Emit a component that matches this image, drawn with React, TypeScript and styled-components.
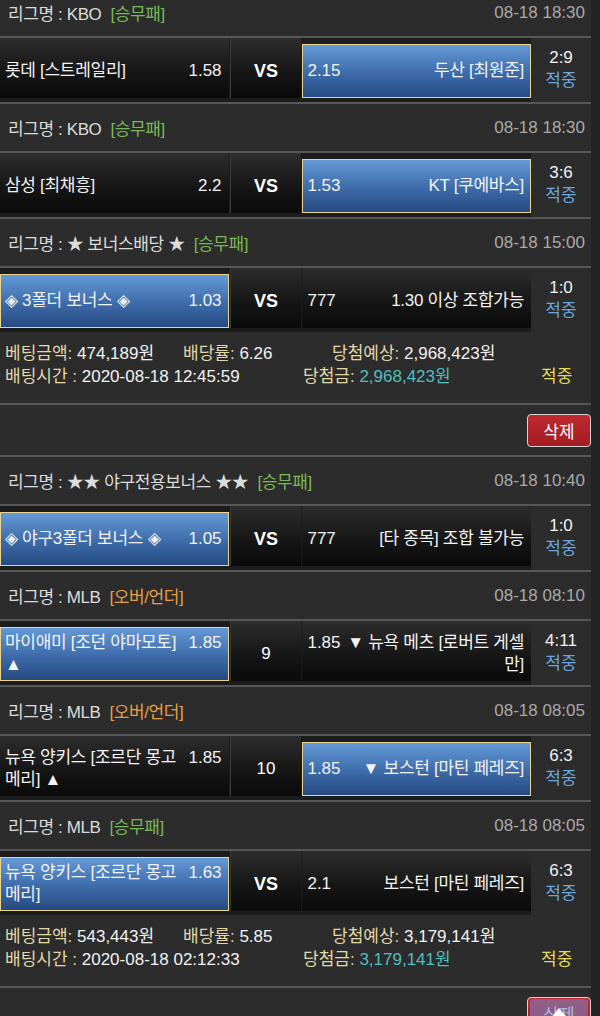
import React from "react";
import styled, { createGlobalStyle } from "styled-components";

const GlobalStyle = createGlobalStyle`
  html, body {
    margin: 0;
    padding: 0;
    background: #232323;
  }
  body {
    font-family: "Liberation Sans", Arial, "Noto Sans CJK KR", sans-serif;
    font-size: 17px;
    color: #eeeeee;
    overflow: hidden;
  }
`;

const Page = styled.div`
  width: 591px;
  margin-top: -11px;
  background: #2c2c2c;
`;

const LeagueHeader = styled.div`
  display: flex;
  align-items: center;
  justify-content: space-between;
  height: 47px;
  padding: 0 6px 0 8px;
  border-bottom: 2px solid #575757;
`;

const LeagueName = styled.div`
  display: flex;
  align-items: center;
  gap: 9px;
  color: #dcdcdc;
  letter-spacing: -0.4px;
`;

const Tag = styled.span<{ $kind: "green" | "orange" }>`
  color: ${({ $kind }) => ($kind === "green" ? "#79b957" : "#e79f45")};
`;

const DateText = styled.span`
  color: #a9a9a9;
`;

const MatchRow = styled.div<{ $divider: boolean }>`
  display: flex;
  min-height: 64px;
  border-bottom: ${({ $divider }) => ($divider ? "2px solid #575757" : "none")};
`;

const Board = styled.div`
  display: flex;
  gap: 1px;
  width: 531px;
  padding-bottom: 4px;
  background: #1c1c1c;
`;

const SideCell = styled.div<{ $picked?: boolean }>`
  box-sizing: border-box;
  width: 229px;
  display: flex;
  align-items: center;
  margin-top: ${({ $picked }) => ($picked ? "6px" : "0")};
  padding: ${({ $picked }) => ($picked ? "0 6px 0 4px" : "6px 7px 0 5px")};
  background: ${({ $picked }) =>
    $picked
      ? "linear-gradient(to bottom, #6599d7, #3d6ba9 55%, #264a80)"
      : "linear-gradient(to bottom, #2d2d2d, #151515 60%, #0a0a0a)"};
  border: ${({ $picked }) => ($picked ? "1px solid #e9d591" : "none")};
  color: #f3f3f3;
`;

const SideText = styled.div<{ $right?: boolean }>`
  width: 100%;
  line-height: 22px;
  letter-spacing: -0.3px;
  text-align: ${({ $right }) => ($right ? "right" : "left")};
`;

const Odds = styled.span<{ $side: "left" | "right" }>`
  float: ${({ $side }) => $side};
  letter-spacing: 0;
  margin-${({ $side }) => ($side === "left" ? "right" : "left")}: 6px;
`;

const MidCell = styled.div<{ $bold?: boolean }>`
  width: 71px;
  display: flex;
  align-items: center;
  justify-content: center;
  padding-top: 6px;
  border-left: 1px solid #3a3a3a;
  background: linear-gradient(to bottom, #2d2d2d, #151515 60%, #0a0a0a);
  color: #ffffff;
  font-size: ${({ $bold }) => ($bold ? "18px" : "17px")};
  font-weight: ${({ $bold }) => ($bold ? 700 : 400)};
`;

const ScoreCol = styled.div`
  flex: 1;
  display: flex;
  flex-direction: column;
  align-items: center;
  justify-content: center;
  line-height: 23px;
  padding-bottom: 2px;
`;

const Score = styled.span`
  color: #f0f0f0;
`;

const Hit = styled.span`
  color: #6aa7df;
`;

const Summary = styled.div`
  padding: 10px 0 0 5px;
  height: 61px;
  border-bottom: 2px solid #575757;
`;

const SummaryLine = styled.div<{ $cols: string }>`
  display: grid;
  grid-template-columns: ${({ $cols }) => $cols};
  line-height: 23px;
  white-space: nowrap;
`;

const Label = styled.span`
  color: #e3d8a6;
`;

const Value = styled.span<{ $tone?: "white" | "teal" }>`
  color: ${({ $tone }) => ($tone === "teal" ? "#4fbfc0" : "#f2f2f2")};
`;

const Status = styled.span`
  color: #e6dc5c;
`;

const ButtonRow = styled.div`
  display: flex;
  justify-content: flex-end;
  align-items: center;
  height: 50px;
  border-bottom: 2px solid #575757;
`;

const DeleteButton = styled.button`
  width: 64px;
  height: 33px;
  border: 1px solid #d6d6d6;
  border-radius: 4px;
  background: linear-gradient(to bottom, #c02a30, #a21c22);
  color: #ffffff;
  font-family: inherit;
  font-size: 17px;
  padding: 0;
`;

const ScrollTop = styled.div`
  position: fixed;
  left: 530px;
  top: 999px;
  width: 58px;
  height: 40px;
  border-radius: 3px;
  background: rgba(118, 132, 196, 0.6);
  display: flex;
  justify-content: center;
  padding-top: 9px;
  box-sizing: border-box;
`;

type Side = { name: string; odds: string; picked?: boolean };
type Match = {
  league: string;
  tag: string;
  tagKind: "green" | "orange";
  date: string;
  home: Side;
  away: Side;
  mid: string;
  midBold?: boolean;
  score: string;
};
type Bet = {
  matches: Match[];
  amount: string;
  rate: string;
  expect: string;
  time: string;
  win: string;
};

const WDL = { tag: "[승무패]", tagKind: "green" as const };
const OU = { tag: "[오버/언더]", tagKind: "orange" as const };

const bets: Bet[] = [
  {
    matches: [
      {
        league: "리그명 : KBO",
        ...WDL,
        date: "08-18 18:30",
        home: { name: "롯데 [스트레일리]", odds: "1.58" },
        away: { name: "두산 [최원준]", odds: "2.15", picked: true },
        mid: "VS",
        midBold: true,
        score: "2:9",
      },
      {
        league: "리그명 : KBO",
        ...WDL,
        date: "08-18 18:30",
        home: { name: "삼성 [최채흥]", odds: "2.2" },
        away: { name: "KT [쿠에바스]", odds: "1.53", picked: true },
        mid: "VS",
        midBold: true,
        score: "3:6",
      },
      {
        league: "리그명 : ★ 보너스배당 ★",
        ...WDL,
        date: "08-18 15:00",
        home: { name: "◈ 3폴더 보너스 ◈", odds: "1.03", picked: true },
        away: { name: "1.30 이상 조합가능", odds: "777" },
        mid: "VS",
        midBold: true,
        score: "1:0",
      },
    ],
    amount: "474,189원",
    rate: "6.26",
    expect: "2,968,423원",
    time: "2020-08-18 12:45:59",
    win: "2,968,423원",
  },
  {
    matches: [
      {
        league: "리그명 : ★★ 야구전용보너스 ★★",
        ...WDL,
        date: "08-18 10:40",
        home: { name: "◈ 야구3폴더 보너스 ◈", odds: "1.05", picked: true },
        away: { name: "[타 종목] 조합 불가능", odds: "777" },
        mid: "VS",
        midBold: true,
        score: "1:0",
      },
      {
        league: "리그명 : MLB",
        ...OU,
        date: "08-18 08:10",
        home: { name: "마이애미 [조던 야마모토] ▲", odds: "1.85", picked: true },
        away: { name: "▼ 뉴욕 메츠 [로버트 게셀만]", odds: "1.85" },
        mid: "9",
        score: "4:11",
      },
      {
        league: "리그명 : MLB",
        ...OU,
        date: "08-18 08:05",
        home: { name: "뉴욕 양키스 [조르단 몽고메리] ▲", odds: "1.85" },
        away: { name: "▼ 보스턴 [마틴 페레즈]", odds: "1.85", picked: true },
        mid: "10",
        score: "6:3",
      },
      {
        league: "리그명 : MLB",
        ...WDL,
        date: "08-18 08:05",
        home: { name: "뉴욕 양키스 [조르단 몽고메리]", odds: "1.63", picked: true },
        away: { name: "보스턴 [마틴 페레즈]", odds: "2.1" },
        mid: "VS",
        midBold: true,
        score: "6:3",
      },
    ],
    amount: "543,443원",
    rate: "5.85",
    expect: "3,179,141원",
    time: "2020-08-18 02:12:33",
    win: "3,179,141원",
  },
];

const MatchBlock = ({ m, divider }: { m: Match; divider: boolean }) => (
  <>
    <LeagueHeader>
      <LeagueName>
        <span>{m.league}</span>
        <Tag $kind={m.tagKind}>{m.tag}</Tag>
      </LeagueName>
      <DateText>{m.date}</DateText>
    </LeagueHeader>
    <MatchRow $divider={divider}>
      <Board>
        <SideCell $picked={m.home.picked}>
          <SideText>
            <Odds $side="right">{m.home.odds}</Odds>
            {m.home.name}
          </SideText>
        </SideCell>
        <MidCell $bold={m.midBold}>{m.mid}</MidCell>
        <SideCell $picked={m.away.picked}>
          <SideText $right>
            <Odds $side="left">{m.away.odds}</Odds>
            {m.away.name}
          </SideText>
        </SideCell>
      </Board>
      <ScoreCol>
        <Score>{m.score}</Score>
        <Hit>적중</Hit>
      </ScoreCol>
    </MatchRow>
  </>
);

const App = () => (
  <>
    <GlobalStyle />
    <Page>
      {bets.map((bet, bi) => (
        <div key={bi}>
          {bet.matches.map((m, i) => (
            <MatchBlock key={i} m={m} divider={i < bet.matches.length - 1} />
          ))}
          <Summary>
            <SummaryLine $cols="178px 149px auto">
              <span>
                <Label>베팅금액:</Label> <Value>{bet.amount}</Value>
              </span>
              <span>
                <Label>배당률:</Label> <Value>{bet.rate}</Value>
              </span>
              <span>
                <Label>당첨예상:</Label> <Value>{bet.expect}</Value>
              </span>
            </SummaryLine>
            <SummaryLine $cols="298px 238px auto">
              <span>
                <Label>배팅시간 :</Label> <Value>{bet.time}</Value>
              </span>
              <span>
                <Label>당첨금:</Label> <Value $tone="teal">{bet.win}</Value>
              </span>
              <Status>적중</Status>
            </SummaryLine>
          </Summary>
          <ButtonRow>
            <DeleteButton>삭제</DeleteButton>
          </ButtonRow>
        </div>
      ))}
    </Page>
    <ScrollTop>
      <svg width="20" height="14" viewBox="0 0 20 14">
        <polygon points="10,0 20,12 13,12 13,14 7,14 7,12 0,12" fill="#ffffff" />
      </svg>
    </ScrollTop>
  </>
);

export default App;
